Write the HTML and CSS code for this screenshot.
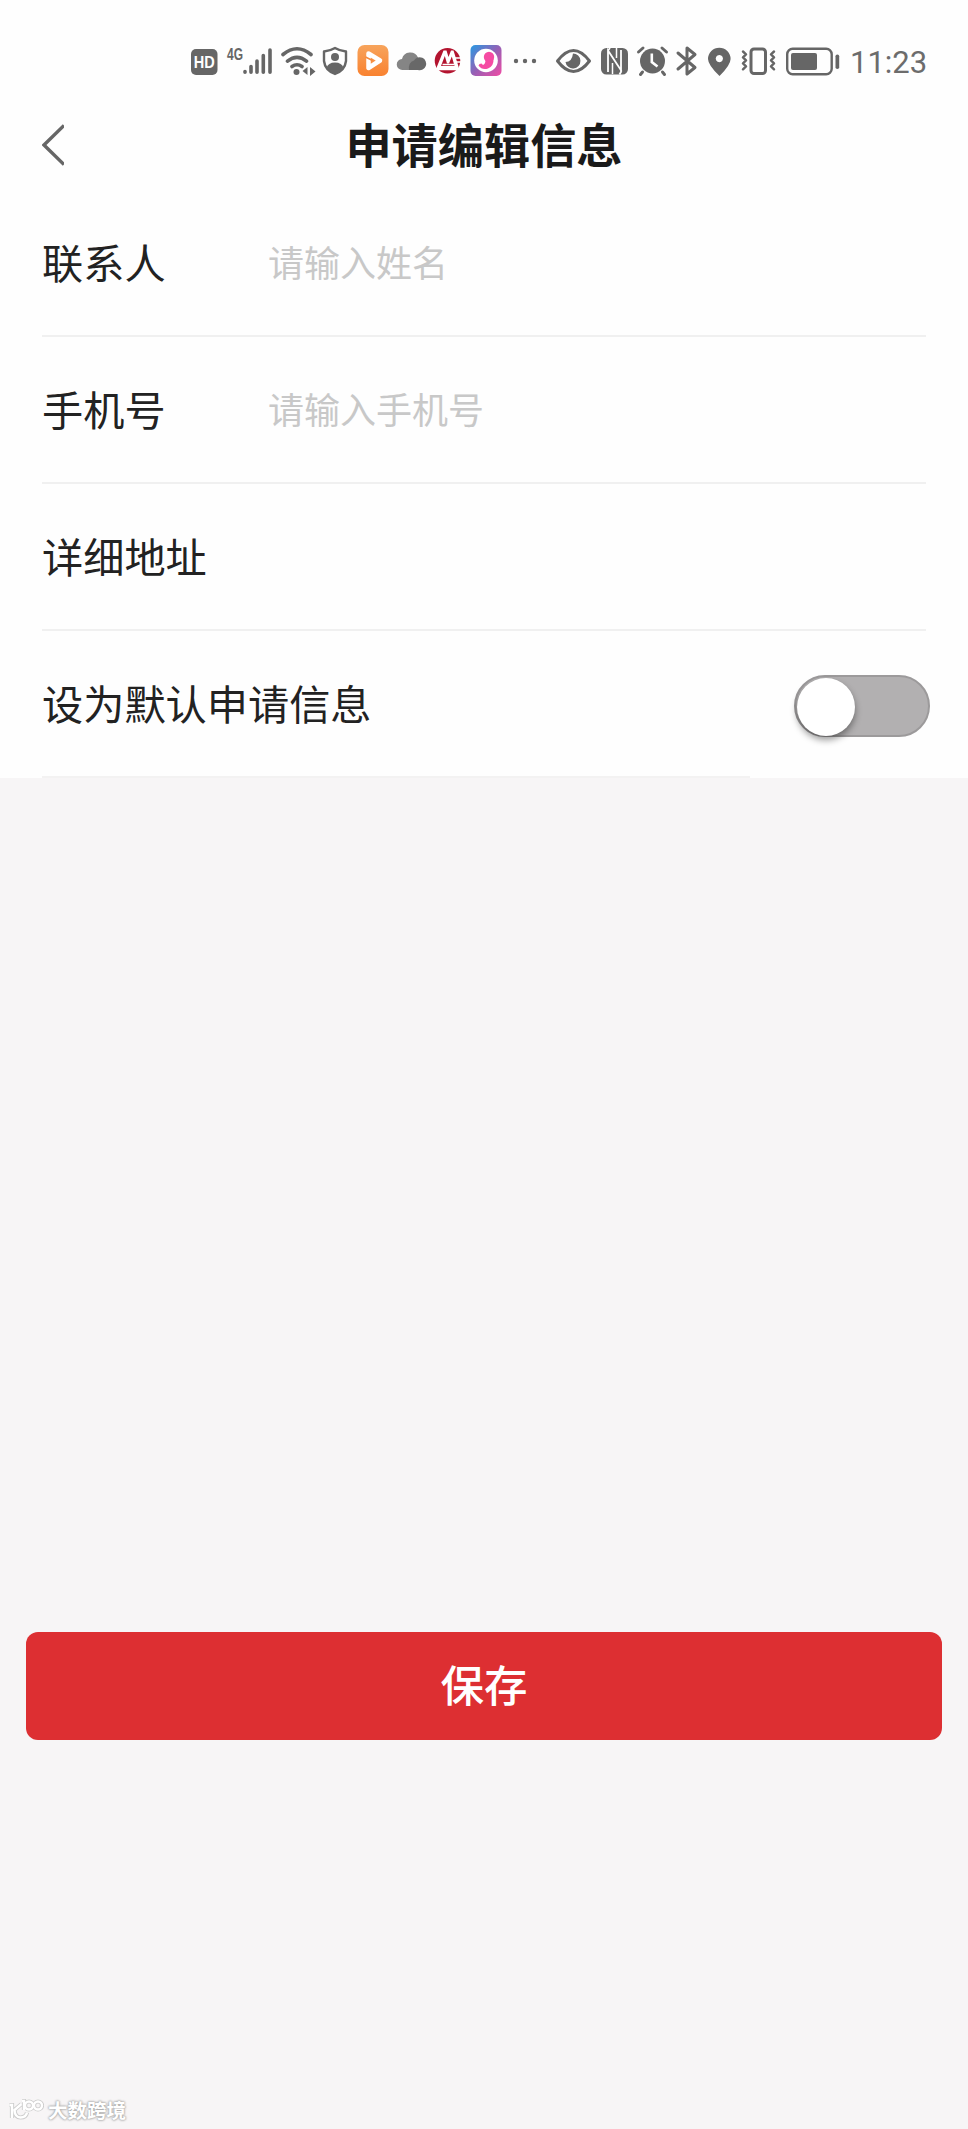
FILE: index.html
```
<!DOCTYPE html>
<html lang="zh-CN">
<head>
    <meta charset="UTF-8">
    <title>申请编辑信息</title>
    <link rel="stylesheet" href="styles.css">
</head>
<body>
<div id="page">
    <div class="top">
        <!--状态栏-->
        <div class="status">
            <svg width="32" height="32" viewBox="0 0 32 32">
                <rect x="2" y="4" width="26.5" height="26" rx="5"/>
                <text x="15.2" y="23" class="hd" textLength="21" lengthAdjust="spacingAndGlyphs">HD</text>
            </svg>
            <svg width="55" height="32" viewBox="0 0 55 32">
                <text x="6" y="14.5" class="net" textLength="16" lengthAdjust="spacingAndGlyphs">4G</text>
                <path class="line w4" d="M24 26.5v.8M30 21.5v5.8M36 16v11.3M42.3 10.5v16.8M49 5v22.3"/>
            </svg>
            <svg width="43" height="32" viewBox="0 0 43 32">
                <path class="line w4" d="M7 9.5Q21 -2 35 9.5M11.5 16.2Q21 8.5 30.5 16.2M16 21.5Q21 18 26 21.5"/>
                <circle cx="20.5" cy="27" r="3"/>
                <path d="M31.5 22v8l-5-4zM34 22l5.5 4.5-5.5 4.5z"/>
            </svg>
            <svg width="33" height="32" viewBox="0 0 33 32">
                <path class="line w2" d="M16 3Q21 6 27 6.5V16Q26 25 16 29Q6 25 5 16V6.5Q11 6 16 3z"/>
                <circle cx="16" cy="12" r="4"/>
                <path d="M7.5 23Q9 17.5 16 17.5T24.5 23Q21.5 27 16 29Q10.5 27 7.5 23z"/>
            </svg>
            <svg width="40" height="32" viewBox="0 0 40 32">
                <defs>
                    <linearGradient id="orange" x1="0" y1="0" x2="0" y2="1"><stop offset="0" stop-color="#f7a45c"/><stop offset="1" stop-color="#f98230"/></linearGradient>
                </defs>
                <rect x="5.5" y="0" width="31" height="31" rx="7" fill="url(#orange)"/>
                <path d="M16.5 8.5L28 15.5L16.5 23z" fill="none" stroke="#fff" stroke-width="4.5" stroke-linejoin="round"/>
                <path d="M13.5 12l7 3.5" stroke="#f58a3c" stroke-width="1.5"/>
            </svg>
            <svg width="37" height="32" viewBox="0 0 37 32">
                <path fill="#858585" d="M10.5 25a5.5 5.5 0 0 1-.5-11A8.5 8.5 0 0 1 26 12.5L27 25z"/>
                <path fill="#686868" d="M17 25Q16 17.5 22 15.5A6.5 6.5 0 1 1 26 25z"/>
            </svg>
            <svg width="37" height="32" viewBox="0 0 37 32">
                <circle cx="18.5" cy="15.7" r="12.8" fill="#b3142f"/>
                <path fill="#fff" d="M8 21.5L14.5 5.5H17.5L19.5 12L22 5.5H24.5L29.5 21.5V24H8z"/>
                <path fill="#b3142f" d="M12 21L15.8 11L18 18.5H20L22.8 11.5L25.5 21z"/>
                <path fill="none" stroke="#fff" stroke-width="1.6" d="M25 13H32M26 17H32M9 24.5H29M13.5 19.5H25"/>
            </svg>
            <svg width="40" height="32" viewBox="0 0 40 32">
                <defs>
                    <linearGradient id="pink" x1="0" y1="0" x2="1" y2="1"><stop offset="0" stop-color="#259ae3"/><stop offset=".5" stop-color="#9560b5"/><stop offset="1" stop-color="#f14ba4"/></linearGradient>
                </defs>
                <rect x="4.5" y="0" width="31" height="31" rx="5" fill="url(#pink)"/>
                <circle cx="20" cy="15.5" r="11.8" fill="#fff"/>
                <circle cx="23" cy="12" r="5.2" fill="#f54ba3"/>
                <path fill="#f54ba3" d="M27.5 14Q28 21 22 23.5Q16 25.5 12.5 20.5Q13 18.5 15.5 18.5L17 20Q19.5 19 19.5 15z"/>
            </svg>
            <svg width="39" height="32" viewBox="0 0 39 32">
                <circle cx="10" cy="16" r="2.2"/><circle cx="19" cy="16" r="2.2"/><circle cx="28" cy="16" r="2.2"/>
            </svg>
            <svg width="51" height="32" viewBox="0 0 51 32">
                <path class="line w3" d="M12.5 16Q28.5-5 44.5 16Q28.5 37 12.5 16z"/>
                <path d="M28 8.500a7.5 7.5 0 1 1-7.5 8.5Q27 17 28 8.500z"/>
            </svg>
            <svg width="37" height="32" viewBox="0 0 37 32">
                <rect x="5" y="3" width="27" height="26.5" rx="5.5"/>
                <path fill="none" stroke="#fefefe" stroke-width="1.8" d="M12 27V5.5L25.5 26M25 5V27.5M12 5.5l2-2.5M25.5 26l-2 3.5"/>
                <path fill="none" stroke="#fefefe" stroke-width="1.5" d="M16.5 29V18M20.5 3V13"/>
            </svg>
            <svg width="39" height="32" viewBox="0 0 39 32">
                <circle cx="19.5" cy="16" r="12.5"/>
                <path class="line w3" d="M5.5 7L10 3M33.5 7L29 3M9.5 27L7.5 29.5M29.5 27L31.5 29.5"/>
                <path fill="none" stroke="#fefefe" stroke-width="2.6" d="M18.8 8.5V17L24.5 21.5"/>
            </svg>
            <svg width="30" height="32" viewBox="0 0 30 32">
                <path class="line w3" d="M6 8L23 22.5L15 29V3L23 9.5L6 24"/>
            </svg>
            <svg width="35" height="32" viewBox="0 0 35 32">
                <path fill-rule="evenodd" d="M17.5 31Q6 20 6 14A11.3 11.3 0 0 1 28.6 14Q28.6 20 17.5 31zM17.3 10a3.6 3.6 0 1 0 .1 0z"/>
            </svg>
            <svg width="43" height="32" viewBox="0 0 43 32">
                <rect class="line w3" x="14" y="4" width="14.5" height="24.5" rx="3"/>
                <path class="line w2" d="M6 6.5l3 2.8-3 3 3 3-3 3 3 3-3 3M37 6.5l-3 2.8 3 3-3 3 3 3-3 3 3 3"/>
            </svg>
            <svg width="65" height="32" viewBox="0 0 65 32">
                <rect class="line w2" x="7.2" y="3.7" width="44.5" height="25.5" rx="5.5"/>
                <rect x="11" y="8" width="26" height="17" rx="2"/>
                <rect x="55.5" y="9.5" width="3.7" height="14.5" rx="1.8"/>
            </svg>
            <span class="time">11:23</span>
        </div>
        <!--标题-->
        <div class="header">
            <svg class="back" width="22" height="42" viewBox="0 0 22 42">
                <path d="M22 1.5L2 21L22 40.5"/>
            </svg>
            <h1>申请编辑信息</h1>
        </div>
        <!--表单-->
        <ul class="form">
            <li><label>联系人</label><span class="tip">请输入姓名</span></li>
            <li><label>手机号</label><span class="tip">请输入手机号</span></li>
            <li><label>详细地址</label></li>
            <li class="last"><label>设为默认申请信息</label><span class="switch"><i></i></span></li>
        </ul>
    </div>
    <div class="save">保存</div>
    <div class="mark">
        <svg width="36" height="24" viewBox="0 0 36 24">
            <path class="shade" d="M1.5 7H4V20M13.5 6L6.5 12Q7 19.5 12.5 19.5Q18 19.5 19 14.5M14 3H16V12"/>
            <circle class="shade" cx="21" cy="7.5" r="4"/><circle class="shade" cx="30" cy="7.5" r="4"/>
            <path d="M1.5 7H4V20M13.5 6L6.5 12Q7 19.5 12.5 19.5Q18 19.5 19 14.5M14 3H16V12"/>
            <circle cx="21" cy="7.5" r="4"/><circle cx="30" cy="7.5" r="4"/>
        </svg>
        <span>大数跨境</span>
    </div>
</div>
</body>
</html>
```
FILE: styles.css
```
*{
    padding: 0;
    margin: 0;
    list-style: none;
    box-sizing: border-box;
}
body{
    font-family: "Noto Sans CJK SC", sans-serif;
    background-color: #f7f5f6;
    color: #222;
}
#page{
    width: 968px;
    height: 2129px;
    display: flex;
    flex-direction: column;
    overflow: hidden;
}
.top{
    height: 778px;
    background-color: #fefefe;
}

/*状态栏*/
.status{
    height: 100px;
    padding: 45px 0 0 189px;
    display: flex;
    align-items: flex-start;
}
.status svg{
    flex: none;
    fill: #666;
}
.status .line{
    fill: none;
    stroke: #666;
    stroke-linecap: round;
    stroke-linejoin: round;
}
.status .w2{
    stroke-width: 2.4;
}
.status .w3{
    stroke-width: 3;
}
.status .w4{
    stroke-width: 3.6;
}
.hd{
    font: bold 17px "Liberation Sans", sans-serif;
    fill: #fff;
    text-anchor: middle;
}
.net{
    font: bold 16px "Liberation Sans", sans-serif;
}
.time{
    margin-left: 5px;
    font: 31px/36px Roboto, sans-serif;
    color: #6c6c6c;
}

/*标题*/
.header{
    height: 90px;
    padding: 0 42px;
    display: grid;
    grid-template-columns: 22px 1fr 22px;
    align-items: center;
}
.back{
    fill: none;
    stroke: #666;
    stroke-width: 3.4;
}
.header h1{
    padding-bottom: 5px;
    font-size: 46.2px;
    line-height: 85px;
    font-weight: bold;
    color: #1a1a1a;
    text-align: center;
}

/*表单*/
.form{
    padding: 0 42px;
}
.form li{
    height: 147px;
    display: flex;
    align-items: center;
    border-bottom: 2px solid #f0f0f0;
}
.form label{
    flex: none;
    min-width: 226px;
    padding-bottom: 4px;
    font-size: 41.2px;
    line-height: 60px;
    white-space: nowrap;
}
.form .tip{
    padding-bottom: 3px;
    font-size: 36px;
    color: #c8c8c8;
}
.form .last{
    width: 708px;
    border-color: #f3f2f2;
}
.switch{
    flex: none;
    width: 136px;
    height: 62px;
    margin: 4px 0 0 422px;
    padding: 1px;
    border: 2px solid #9c9a9b;
    border-radius: 31px;
    background-color: #b2b0b1;
}
.switch i{
    display: block;
    width: 58px;
    height: 58px;
    border-radius: 50%;
    background-color: #fff;
    box-shadow: 0 4px 7px rgba(0, 0, 0, .4);
}

.save{
    height: 108px;
    margin: 854px 26px 0;
    border-radius: 12px;
    background-color: #dd2f32;
    color: #fff;
    font-size: 43.5px;
    font-weight: 500;
    line-height: 104px;
    text-align: center;
}

.mark{
    display: flex;
    align-items: center;
    margin: 355px 0 0 8px;
    height: 30px;
}
.mark svg{
    fill: none;
    stroke: #fff;
    stroke-width: 2.4;
}
.mark .shade{
    stroke: #ccc;
    stroke-width: 4.2;
}
.mark span{
    margin-left: 4px;
    font-size: 19.5px;
    line-height: 28px;
    font-weight: bold;
    color: #fff;
    text-shadow: 0 0 2px #aaa, 0 0 2px #aaa, 0 0 3px #bbb;
}
```
